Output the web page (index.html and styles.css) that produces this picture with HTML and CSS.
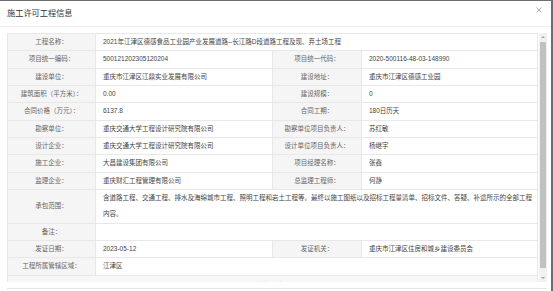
FILE: index.html
```html
<!DOCTYPE html>
<html lang="zh-CN">
<head>
    <meta charset="UTF-8">
    <meta name="viewport" content="width=device-width, initial-scale=1.0">
    <title>施工许可工程信息</title>
    <link rel="stylesheet" href="styles.css">
</head>
<body>

<div class="modal">
    <div class="modal-head">
        <span class="modal-title">施工许可工程信息</span>
        <span class="close">
            <svg width="6" height="6" viewBox="0 0 6 6"><path d="M0.5 0.5L5.5 5.5M5.5 0.5L0.5 5.5" stroke="#aaa" stroke-width="1"/></svg>
        </span>
    </div>
    <div class="modal-body">
        <div class="scroll">
            <div class="scroll-content">
                <table class="info">
                    <colgroup>
                        <col class="c-label"><col class="c-value"><col class="c-label2"><col class="c-value2">
                    </colgroup>
                    <tr>
                        <th>工程名称：</th>
                        <td colspan="3">2021年江津区德感食品工业园产业发展道路--长江路D段道路工程及现、弃土场工程</td>
                    </tr>
                    <tr>
                        <th>项目统一编码：</th><td>500121202305120204</td>
                        <th>项目统一代码：</th><td>2020-500116-48-03-148990</td>
                    </tr>
                    <tr>
                        <th>建设单位：</th><td>重庆市江津区江鼎实业发展有限公司</td>
                        <th>建设地址：</th><td>重庆市江津区德感工业园</td>
                    </tr>
                    <tr>
                        <th>建筑面积（平方米）：</th><td>0.00</td>
                        <th>建设规模：</th><td>0</td>
                    </tr>
                    <tr>
                        <th>合同价格（万元）：</th><td>6137.8</td>
                        <th>合同工期：</th><td>180日历天</td>
                    </tr>
                    <tr>
                        <th>勘察单位：</th><td>重庆交通大学工程设计研究院有限公司</td>
                        <th>勘察单位项目负责人：</th><td>苏红敏</td>
                    </tr>
                    <tr>
                        <th>设计企业：</th><td>重庆交通大学工程设计研究院有限公司</td>
                        <th>设计单位项目负责人：</th><td>杨继宇</td>
                    </tr>
                    <tr>
                        <th>施工企业：</th><td>大昌建设集团有限公司</td>
                        <th>项目经理名称：</th><td>张鑫</td>
                    </tr>
                    <tr>
                        <th>监理企业：</th><td>重庆财汇工程管理有限公司</td>
                        <th>总监理工程师：</th><td>何静</td>
                    </tr>
                    <tr>
                        <th>承包范围：</th>
                        <td colspan="3">含道路工程、交通工程、排水及海绵城市工程、照明工程和岩土工程等。最终以施工图纸以及招标工程量清单、招标文件、答疑、补遗所示的全部工程内容。</td>
                    </tr>
                    <tr>
                        <th>备注：</th><td colspan="3"></td>
                    </tr>
                    <tr>
                        <th>发证日期：</th><td>2023-05-12</td>
                        <th>发证机关：</th><td>重庆市江津区住房和城乡建设委员会</td>
                    </tr>
                    <tr>
                        <th>工程所属管辖区域：</th><td colspan="3">江津区</td>
                    </tr>
                    <tr class="file-row">
                        <td colspan="4"><a href="#">点击查看附件信息</a></td>
                    </tr>
                </table>
            </div>
            <div class="scrollbar">
                <span class="sb-btn sb-up"></span>
                <span class="sb-thumb"></span>
                <span class="sb-btn sb-down"></span>
            </div>
        </div>
    </div>
    <div class="modal-foot"></div>
</div>

</body>
</html>
```

FILE: styles.css
```css
body {
    margin: 0;
    background-color: #6e6e6e; /* page overlay behind the dialog */
    font-family: "Liberation Sans", "Noto Sans CJK SC", sans-serif;
    overflow: hidden;
}
.modal {
    width: 551px;
    height: 290px;
    margin-top: 1px;
    background-color: #fff;
    overflow: hidden;
}
.modal-head {
    height: 25px;
    border-bottom: 1px solid #eee;
    display: flex;
    justify-content: space-between;
    align-items: center;
    padding: 0 9px 4px 7px;
    box-sizing: border-box;
    height: 26px;
}
.modal-title {
    font-size: 8.2px;
    color: #333;
}
.close {
    display: flex;
    margin-top: -4px;
}
.modal-body {
    padding: 6px 0 0 7px;
}
.scroll {
    display: flex;
    width: 540px;
    height: 249px;
    gap: 2px;
    overflow: hidden;
}
.scroll-content {
    width: 530px;
}
.info {
    width: 530px;
    table-layout: fixed;
    border-collapse: collapse;
    font-size: 6.5px;
}
.c-label { width: 88px; }
.c-value { width: 177px; }
.c-label2 { width: 89px; }
.c-value2 { width: 176px; }
.info th,
.info td {
    border: 1px solid #e8e8e8;
    height: 16.33px;
    line-height: 16.33px;
    padding: 0;
}
.info th {
    background-color: #f5f5f5;
    color: #666;
    font-weight: normal;
    text-align: center;
}
.info td {
    color: #444;
    padding-left: 7px;
    padding-right: 2px;
    text-align: left;
}
.info .file-row td {
    background-color: #f7f7f7;
    text-align: center;
    padding-top: 2px;
}
.file-row a {
    color: #3b7dc4;
    text-decoration: none;
}
.scrollbar {
    width: 8px;
    height: 249px;
    background-color: #f1f1f1;
    display: flex;
    flex-direction: column;
}
.sb-btn {
    height: 8px;
    display: flex;
    justify-content: center;
    align-items: center;
}
.sb-up::before {
    content: "";
    border-left: 2px solid transparent;
    border-right: 2px solid transparent;
    border-bottom: 2px solid #a3a3a3;
}
.sb-down::before {
    content: "";
    border-left: 2px solid transparent;
    border-right: 2px solid transparent;
    border-top: 2px solid #a3a3a3;
}
.sb-thumb {
    margin: 1px 1px;
    height: 226px;
    background-color: #c1c1c1;
}
.sb-down {
    margin-top: auto;
}
.modal-foot {
    margin: 6px 0 0 7px;
    width: 540px;
    border-top: 1px solid #e5e5e5;
}
```
